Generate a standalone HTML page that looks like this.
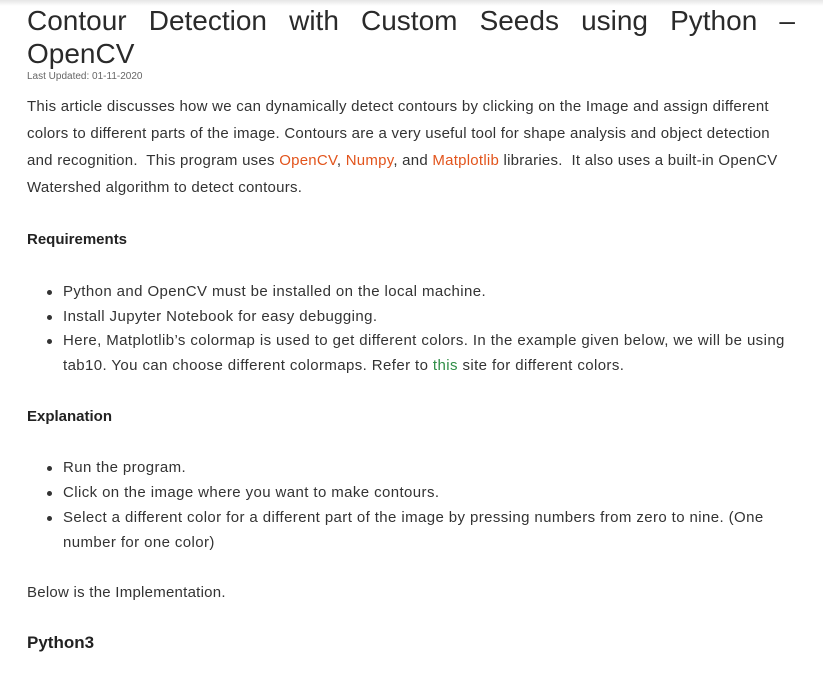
<!DOCTYPE html>
<html><head><meta charset="utf-8"><style>
html,body{margin:0;padding:0;background:#fff;}
body{width:823px;height:674px;overflow:hidden;position:relative;font-family:"Liberation Sans",sans-serif;color:#333;}
.shadow{position:absolute;left:0;top:0;width:823px;height:6px;background:linear-gradient(#e6e6e6,#fff);}
.t{position:absolute;left:27px;white-space:nowrap;}
.title{font-size:28px;color:#2a2a2a;line-height:33px;}
.tl{display:flex;justify-content:space-between;width:768px;}
.p{font-size:15px;letter-spacing:0.25px;}
.l{letter-spacing:0.4px;}
.b{font-weight:bold;font-size:15px;color:#222;}
.o{color:#e2541c;}
.g{color:#2f8d46;}
.dot{position:absolute;left:47px;width:5px;height:5px;border-radius:50%;background:#333;}
</style></head><body>
<div class="shadow"></div>
<div class="t title" style="top:4px"><div class="tl"><span>Contour</span><span>Detection</span><span>with</span><span>Custom</span><span>Seeds</span><span>using</span><span>Python</span><span>–</span></div></div>
<div class="t title" style="top:37px">OpenCV</div>
<div class="t" style="top:71px;font-size:10px;color:#666">Last Updated: 01-11-2020</div>
<div class="t p" style="top:98px">This article discusses how we can dynamically detect contours by clicking on the Image and assign different</div>
<div class="t p" style="top:125px">colors to different parts of the image. Contours are a very useful tool for shape analysis and object detection</div>
<div class="t p" style="top:152px">and recognition.&nbsp; This program uses <span class="o">OpenCV</span>, <span class="o">Numpy</span>, and <span class="o">Matplotlib</span> libraries.&nbsp; It also uses a built-in OpenCV</div>
<div class="t p" style="top:179px">Watershed algorithm to detect contours.</div>
<div class="t b" style="top:231px">Requirements</div>
<div class="dot" style="top:290px"></div><div class="t p l" style="left:63px;top:283px">Python and OpenCV must be installed on the local machine.</div>
<div class="dot" style="top:315px"></div><div class="t p l" style="left:63px;top:308px">Install Jupyter Notebook for easy debugging.</div>
<div class="dot" style="top:339px"></div><div class="t p l" style="left:63px;top:332px">Here, Matplotlib’s colormap is used to get different colors. In the example given below, we will be using</div>
<div class="t p l" style="left:63px;top:357px">tab10. You can choose different colormaps. Refer to <span class="g">this</span> site for different colors.</div>
<div class="t b" style="top:408px">Explanation</div>
<div class="dot" style="top:466px"></div><div class="t p l" style="left:63px;top:459px">Run the program.</div>
<div class="dot" style="top:491px"></div><div class="t p l" style="left:63px;top:484px">Click on the image where you want to make contours.</div>
<div class="dot" style="top:516px"></div><div class="t p l" style="left:63px;top:509px">Select a different color for a different part of the image by pressing numbers from zero to nine. (One</div>
<div class="t p l" style="left:63px;top:534px">number for one color)</div>
<div class="t p" style="top:584px">Below is the Implementation.</div>
<div class="t b" style="top:633px;font-size:17px">Python3</div>
</body></html>
